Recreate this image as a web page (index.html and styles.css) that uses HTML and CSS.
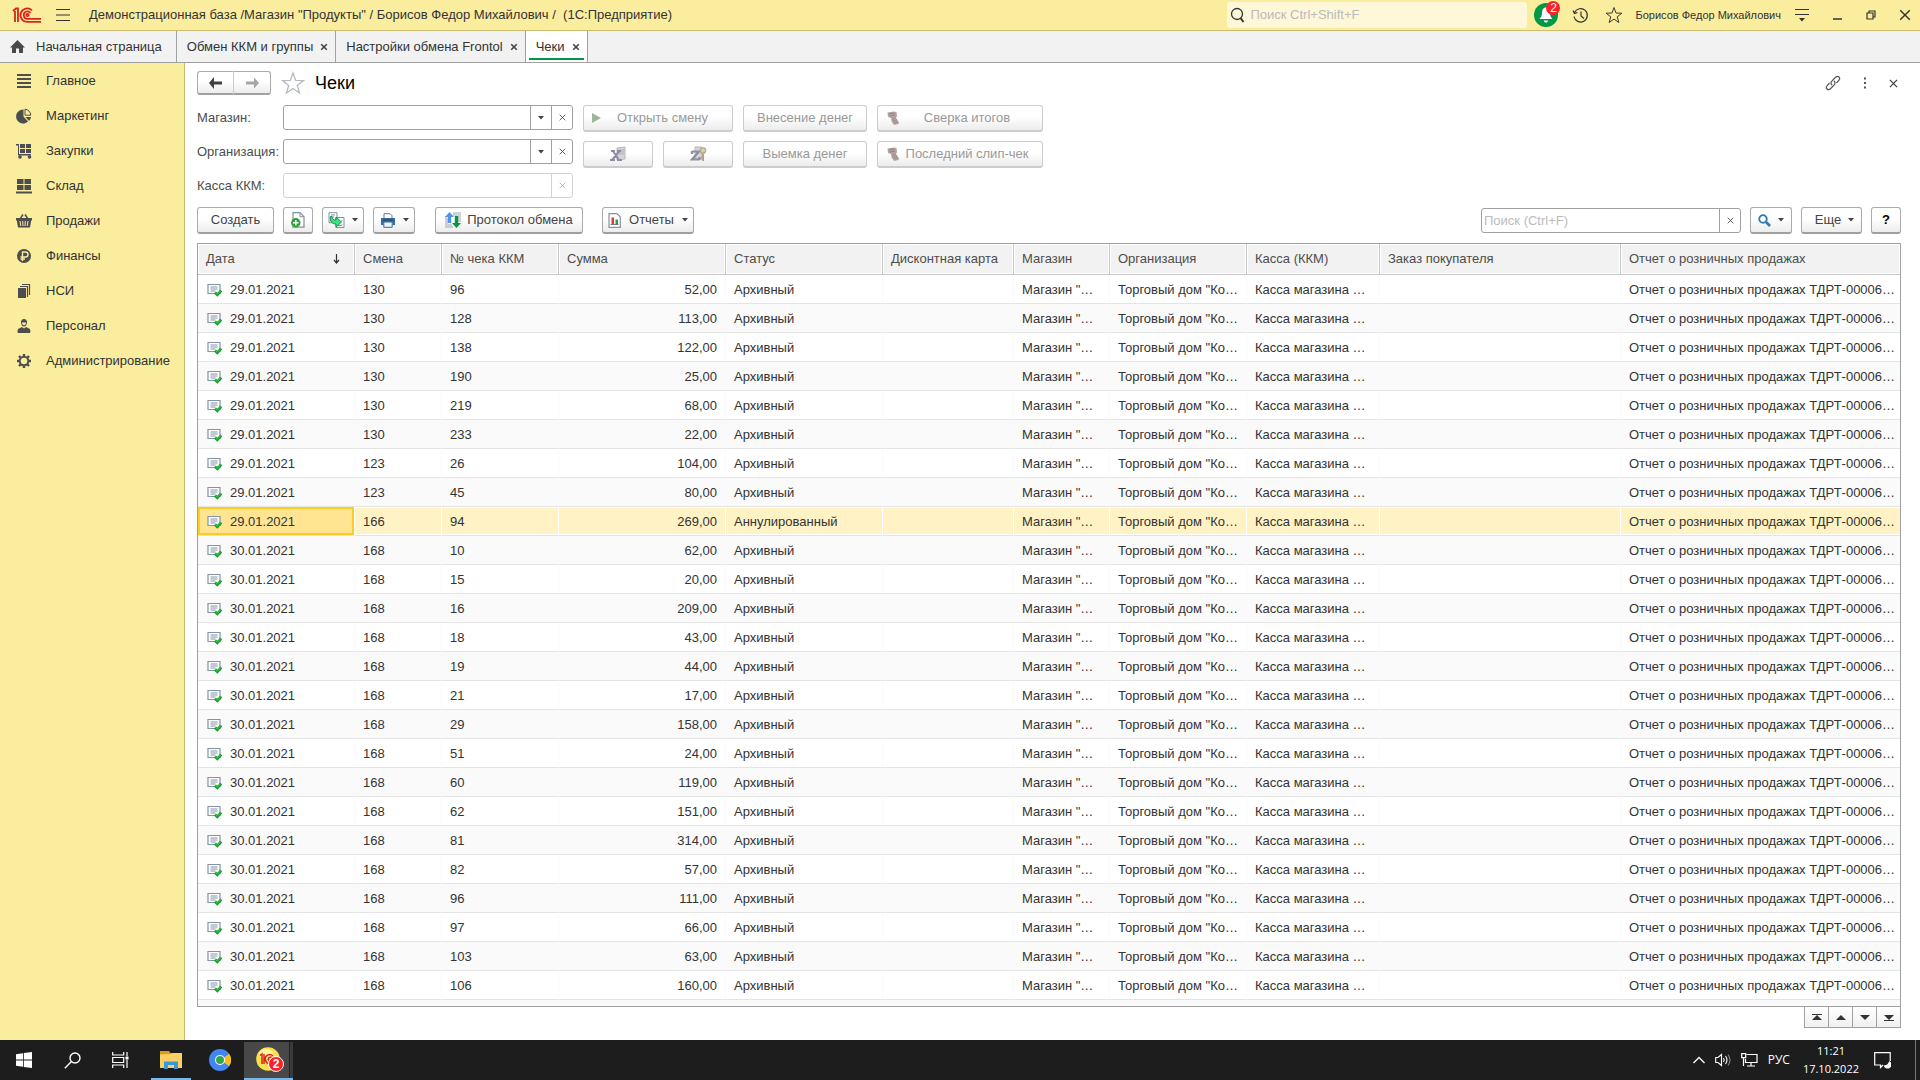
FILE: index.html
```html
<!DOCTYPE html>
<html lang="ru">
<head>
<meta charset="utf-8">
<title>Чеки</title>
<link rel="stylesheet" href="styles.css">
</head>
<body>
<svg class="sprite" aria-hidden="true">
  <symbol id="i-close" viewBox="0 0 10 10"><path d="M1.5 1.5l7 7M8.5 1.5l-7 7" fill="none" stroke="currentColor" stroke-width="2"/></symbol>
  <symbol id="i-thin-close" viewBox="0 0 10 10"><path d="M1 1l8 8M9 1l-8 8" fill="none" stroke="currentColor" stroke-width="1.2"/></symbol>
  <symbol id="i-caret" viewBox="0 0 6 4"><path d="M0 0h6L3 3.5z" fill="currentColor"/></symbol>
  <symbol id="i-star" viewBox="0 0 24 24"><path d="M12 2l2.700 7.400 7.800.2-6.200 4.800 2.200 7.600L12 17.500 5.500 22l2.200-7.600L1.500 9.600l7.800-.2z" fill="none" stroke="currentColor" stroke-width="1.300"/></symbol>
  <symbol id="i-terminal" viewBox="0 0 14 14"><path d="M1.500 1.500L8 .5 10.500 1l.5 4-1 2 3 4.500-.5 1.500-4.500 1L5.500 10.500 5 7 2 6z" fill="#b3a3a3"/><path d="M3 3l5.500-1M4 5l5-1" stroke="#948488" stroke-width="1.200"/><path d="M6.500 8l3-1M7 10l4-1.200M8 12l4-1.200" stroke="#9d8d90"/></symbol>
  <symbol id="i-doc" viewBox="0 0 15 14"><path d="M1 1.500h12v9H1z" fill="#fff" stroke="#8394a8" stroke-width="1.200"/><path d="M3.500 4h7M3.500 6h7M3.500 8h5" stroke="#8394a8"/><path d="M8 9.500l2.300 2.300L14.200 7.600" fill="none" stroke="#159a2c" stroke-width="2.800"/><path d="M8.300 9.300l2 2L13.800 7.600" fill="none" stroke="#37cf45" stroke-width="1"/></symbol>
</svg>

<header class="titlebar">
  <svg class="logo" viewBox="0 0 30 18" fill="none" stroke="#d9261c" stroke-width="1.800"><path d="M1 5l3-2.500h2V16M3 5v11"/><path d="M20 4.500A6.700 6.700 0 1 0 16 15.800h13M18.500 7A3.700 3.700 0 1 0 16 12.800h13"/><circle cx="15.500" cy="9" r="1.200"/></svg>
  <button class="plain" aria-label="Меню"><svg width="16" height="14" viewBox="0 0 16 14"><path d="M1 1.500h14M1 7h14M1 12.500h14" stroke="#333" stroke-width="1.200"/></svg></button>
  <span class="app-title">Демонстрационная база /Магазин "Продукты" / Борисов Федор Михайлович /&nbsp; (1С:Предприятие)</span>
  <label class="global-search">
    <svg width="15" height="16" viewBox="0 0 15 16" fill="none" stroke="#333"><circle cx="7" cy="7" r="5.500" stroke-width="1.300"/><path d="M10.500 11l3 4" stroke-width="2"/></svg>
    <input type="text" placeholder="Поиск Ctrl+Shift+F" aria-label="Поиск">
  </label>
  <button class="plain bell" aria-label="Уведомления"><svg width="24" height="24" viewBox="0 0 24 24"><circle cx="12" cy="12" r="12" fill="#009846"/><path d="M12 4.500c-3 0-4 2.500-4 5.500 0 3-1 4-2.500 6h13c-1.500-2-2.500-3-2.500-6 0-3-1-5.500-4-5.500zM10 17.500h4c0 1.500-.8 2-2 2s-2-.5-2-2z" fill="#fff"/></svg><span class="badge">2</span></button>
  <button class="plain" aria-label="История"><svg width="17" height="17" viewBox="0 0 17 17" fill="none" stroke="#333" stroke-width="1.200"><path d="M2.500 5.500A6.700 6.700 0 1 1 2 9.500M1 3.500l1.500 3 3-1M9 4.500V9l3 2.500"/></svg></button>
  <button class="plain dark" aria-label="Избранное"><svg width="18" height="18"><use href="#i-star"/></svg></button>
  <a class="user" href="#">Борисов Федор Михайлович</a>
  <button class="plain" aria-label="Настройки"><svg width="16" height="14" viewBox="0 0 16 14"><path d="M1 1.500h14M1 6.500h14" stroke="#333" stroke-width="1.200"/><path d="M5 10h6l-3 3.500z" fill="#333"/></svg></button>
  <div class="window-buttons">
    <button class="plain" aria-label="Свернуть"><svg width="10" height="10" viewBox="0 0 10 10"><path d="M0 9h9" stroke="#333" stroke-width="1.500"/></svg></button>
    <button class="plain" aria-label="Восстановить"><svg width="10" height="10" viewBox="0 0 10 10" fill="none" stroke="#333" stroke-width="1.200"><path d="M1 3h6v6H1zM3 3V1h6v6H7"/></svg></button>
    <button class="plain dark" aria-label="Закрыть"><svg width="12" height="12"><use href="#i-thin-close"/></svg></button>
  </div>
</header>

<nav class="tabs">
  <a class="tab home" href="#"><svg width="15" height="14" viewBox="0 0 15 14"><path d="M7.500 0L0 7.500h2V13h4V8.500h3V13h4V7.500h2z" fill="#4a4a4a"/></svg>Начальная страница</a>
  <a class="tab" href="#">Обмен ККМ и группы<svg class="x"><use href="#i-close"/></svg></a>
  <a class="tab" href="#">Настройки обмена Frontol<svg class="x"><use href="#i-close"/></svg></a>
  <a class="tab active" href="#">Чеки<svg class="x"><use href="#i-close"/></svg></a>
</nav>

<div class="workspace">
  <nav class="sidebar">
    <a href="#"><svg viewBox="0 0 16 16"><path d="M1 2h14M1 6h14M1 10h14M1 14h14" stroke="#4d4d4d" stroke-width="2"/></svg>Главное</a>
    <a href="#"><svg viewBox="0 0 16 16"><path d="M7.500 1.500v7l4.500 5A7 7 0 1 1 7.500 1.500z" fill="#4d4d4d"/><path d="M9 1.200v6h5.800A6.300 6.300 0 0 0 9 1.200z" fill="none" stroke="#4d4d4d"/><path d="M9.500 9H15a7 7 0 0 1-2 4z" fill="#4d4d4d"/></svg>Маркетинг</a>
    <a href="#"><svg viewBox="0 0 16 16" fill="#4d4d4d"><path d="M0 1h3v10h12v1.500H2V2.500H0z"/><path d="M4 1h5v4H4zM10 1h5v4h-5zM4 6h5v4H4zM10 6h5v4h-5z"/><circle cx="4" cy="14" r="1.800"/><circle cx="13.500" cy="14" r="1.800"/></svg>Закупки</a>
    <a href="#"><svg viewBox="0 0 16 16" fill="#4d4d4d"><path d="M1 1h6.500v5H1zM8.500 1H15v5H8.500zM1 7h6.500v5H1zM8.500 7H15v5H8.500zM0 13.500h16v2H0z"/></svg>Склад</a>
    <a href="#"><svg viewBox="0 0 16 16"><path d="M4 6l3-4.500M12 6L9 1.500" stroke="#4d4d4d" stroke-width="1.500"/><path d="M0 5h16v2.500h-.8L14 14.500H2L.8 7.500H0z" fill="#4d4d4d"/><path d="M4 8l.8 5M6.700 8l.3 5M9.300 8L9 13M12 8l-.8 5" stroke="#fbed9e"/></svg>Продажи</a>
    <a href="#"><svg viewBox="0 0 16 16"><circle cx="8" cy="8" r="7" fill="#4d4d4d"/><path d="M6.500 13V4h3a2.400 2.400 0 0 1 0 5H4.500M4.500 11H9" fill="none" stroke="#fbed9e" stroke-width="1.400"/></svg>Финансы</a>
    <a href="#"><svg viewBox="0 0 16 16"><path d="M2 5h8v10H2z" fill="#4d4d4d"/><path d="M4 3.500h7.500V14M6 1.500h7.500V12" fill="none" stroke="#4d4d4d" stroke-width="1.200"/></svg>НСИ</a>
    <a href="#"><svg viewBox="0 0 16 16"><path d="M5 4c0-4 6-4 6 0 0 2.500-1.200 4.500-3 4.500S5 6.500 5 4z" fill="#4d4d4d"/><path d="M6 4.500h4C10 6.300 9 7.300 8 7.300S6 6.300 6 4.500z" fill="#fbed9e"/><path d="M2 15c-.6 0-.8-4 1-4.500L6 9l2 1.500L10 9l3 1.500c1.800.5 1.600 4.500 1 4.500z" fill="#4d4d4d"/></svg>Персонал</a>
    <a href="#"><svg viewBox="0 0 16 16" fill="none" stroke="#4d4d4d"><circle cx="8" cy="8" r="4.300" stroke-width="2"/><path d="M8 1v3M8 12v3M1 8h3M12 8h3M3 3l2 2M11 11l2 2M13 3l-2 2M5 11l-2 2" stroke-width="2.400"/></svg>Администрирование</a>
  </nav>

  <main class="page">
    <div class="page-head">
      <div class="history">
        <button class="btn" aria-label="Назад"><svg width="16" height="12" viewBox="0 0 16 12"><path d="M6 0v4.500h8v3H6V12L1 6z" fill="#404040"/></svg></button>
        <button class="btn" aria-label="Вперед"><svg width="16" height="12" viewBox="0 0 16 12"><path d="M10 .5v4H2v3h8v4L15 6z" fill="#a5a5a5"/></svg></button>
      </div>
      <button class="plain pale" aria-label="В избранное"><svg width="24" height="24"><use href="#i-star"/></svg></button>
      <h1>Чеки</h1>
      <div class="page-tools">
        <button class="plain" aria-label="Ссылка"><svg width="16" height="16" viewBox="0 0 16 16" fill="none" stroke="#555" stroke-width="1.200"><path d="M7.200 10.200C5.700 9 5.600 7.400 6.800 6.200l3.700-3.900c2.600-2.300 5.500.6 3.300 3.100L11.500 8"/><path d="M8.800 5.800c1.500 1.200 1.600 2.800.4 4l-3.700 3.900c-2.600 2.300-5.500-.6-3.300-3.100L4.500 8"/></svg></button>
        <button class="plain" aria-label="Действия"><svg width="4" height="12" viewBox="0 0 4 12"><path d="M1 .5h2v2H1zM1 5h2v2H1zM1 9.500h2v2H1z" fill="#555"/></svg></button>
        <button class="plain" aria-label="Закрыть форму"><svg width="9" height="9"><use href="#i-thin-close"/></svg></button>
      </div>
    </div>

    <div class="form">
      <div class="fields">
        <label for="shop">Магазин:</label>
        <div class="combo"><input id="shop" type="text"><button aria-label="Выбрать"><svg width="6" height="4"><use href="#i-caret"/></svg></button><button aria-label="Очистить"><svg width="7" height="7"><use href="#i-thin-close"/></svg></button></div>
        <label for="org">Организация:</label>
        <div class="combo"><input id="org" type="text"><button aria-label="Выбрать"><svg width="6" height="4"><use href="#i-caret"/></svg></button><button aria-label="Очистить"><svg width="7" height="7"><use href="#i-thin-close"/></svg></button></div>
        <label for="kkm">Касса ККМ:</label>
        <div class="combo off"><input id="kkm" type="text" disabled><button disabled aria-label="Очистить"><svg width="7" height="7"><use href="#i-thin-close"/></svg></button></div>
      </div>
      <div class="actions">
        <button class="btn wide lead" disabled><svg width="9" height="10" viewBox="0 0 9 10"><path d="M0 0l9 5-9 5z" fill="#9db49d"/></svg><span>Открыть смену</span></button>
        <button class="btn" disabled>Внесение денег</button>
        <button class="btn lead" disabled><svg width="14" height="14"><use href="#i-terminal"/></svg><span>Сверка итогов</span></button>
        <button class="btn" disabled aria-label="X-отчет"><svg width="17" height="16" viewBox="0 0 17 16"><path d="M7 2l8-1v12l-8 1z" fill="#d5d5d8" stroke="#b8b8b8"/><path d="M9 4h5M9 6h5M9 8h5" stroke="#b0b0b5"/><path d="M1 5h4M7 5h4M0 14h5M7 14h5M3 5l6 9M9.500 5L2 14" fill="none" stroke="#8d8da6" stroke-width="2"/></svg></button>
        <button class="btn" disabled aria-label="Z-отчет"><svg width="17" height="16" viewBox="0 0 17 16"><path d="M5 1h7v12H5z" fill="#d5d5d8" stroke="#b8b8b8"/><path d="M2 5.500h7L2 13.500h7.500M2 5v3M9.500 14v-3" fill="none" stroke="#8d8da6" stroke-width="2.200"/><circle cx="13" cy="4.500" r="2.700" fill="#d9cfae" stroke="#b3a98d" stroke-width="1.300"/><path d="M13 7.500V15M13 11.500h-2" stroke="#b3a08d" stroke-width="2"/></svg></button>
        <button class="btn" disabled>Выемка денег</button>
        <button class="btn lead" disabled><svg width="14" height="14"><use href="#i-terminal"/></svg><span>Последний слип-чек</span></button>
      </div>
    </div>

    <div class="toolbar">
      <button class="btn w-create">Создать</button>
      <button class="btn w-icon" aria-label="Скопировать"><svg width="14" height="16" viewBox="0 0 14 16"><path d="M2 .7h7l4 4v10.500H2z" fill="#fff" stroke="#8090a0" stroke-width="1.200"/><path d="M9 .7v4h4" fill="none" stroke="#8090a0"/><circle cx="4.800" cy="10.800" r="4.700" fill="#27a338"/><path d="M4.800 8v5.600M2 10.800h5.600" stroke="#fff" stroke-width="1.500"/></svg></button>
      <button class="btn w-drop" aria-label="Создать на основании"><svg width="17" height="16" viewBox="0 0 17 16"><path d="M1 .7h8v10H1zM8 5.500h8v10H8z" fill="#fff" stroke="#8090a0"/><path d="M3 3h4M3 5h3M13.500 8.500h1M13.500 13h1M10 13.500h4" stroke="#8090a0"/><path d="M2.500 4.500c-.8 5 1.500 7.500 5.500 7.500v3l5.500-5L8 5v3C5.500 8 4 7.500 4 4.500z" fill="#3fe084" stroke="#16924a"/></svg><svg width="6" height="4"><use href="#i-caret"/></svg></button>
      <button class="btn w-drop" aria-label="Печать"><svg width="16" height="15" viewBox="0 0 16 15"><path d="M4 .7h6l2 2V6H4z" fill="#fff" stroke="#5b7996"/><path d="M1 5h14v7h-2.500V9.500h-9V12H1z" fill="#356c9c"/><path d="M3.800 9h8.400v5.300H3.800z" fill="#eef3f7" stroke="#356c9c"/><path d="M3 7h10" stroke="#1d4566"/></svg><svg width="6" height="4"><use href="#i-caret"/></svg></button>
      <button class="btn w-log"><svg width="16" height="16" viewBox="0 0 16 16"><path d="M0 5h2M0 7h3M0 9h3M0 11h3M0 13h7M0 15h8M8 1h8M8 3h8M13 5h3M13 7h3M13 9h3" stroke="#9aa7b5"/><path d="M4.500 0L9 5H6.200v6H2.800V5H0z" fill="#4f93ee"/><path d="M11.500 16L7 11h2.800V4h3.400v7H16z" fill="#009846"/></svg>Протокол обмена</button>
      <button class="btn w-report"><svg width="13" height="15" viewBox="0 0 13 15"><path d="M1 .7h8l3.300 3.300v10.300H1z" fill="#fff" stroke="#8094a5" stroke-width="1.200"/><path d="M2.500 11.500h8" stroke="#777"/><path d="M3.500 4.500H6V11H3.500z" fill="#e33"/><path d="M7.500 6.500H10V11H7.500z" fill="#19a33c"/></svg>Отчеты<svg width="6" height="4"><use href="#i-caret"/></svg></button>
      <div class="combo list-search"><input type="text" placeholder="Поиск (Ctrl+F)" aria-label="Поиск по списку"><button aria-label="Очистить поиск"><svg width="7" height="7"><use href="#i-thin-close"/></svg></button></div>
      <button class="btn w-drop" aria-label="Найти"><svg width="13" height="13" viewBox="0 0 13 13" fill="none" stroke="#2f7ab0"><circle cx="5" cy="5" r="3.800" stroke-width="1.800"/><path d="M8 8l4 4" stroke-width="2.600"/></svg><svg width="6" height="4"><use href="#i-caret"/></svg></button>
      <button class="btn w-more">Еще<svg width="6" height="4"><use href="#i-caret"/></svg></button>
      <button class="btn w-icon help">?</button>
    </div>

    <div class="grid-frame">
      <table class="grid">
        <colgroup><col class="c-date"><col class="c-shift"><col class="c-num"><col class="c-sum"><col class="c-date"><col class="c-card"><col class="c-shop"><col class="c-org"><col class="c-kkm"><col class="c-order"><col></colgroup>
        <thead><tr>
          <th><span class="sorted">Дата<svg width="7" height="10" viewBox="0 0 7 10"><path d="M3.500 0v9M1 6l2.500 3L6 6" fill="none" stroke="#333" stroke-width="1.200"/></svg></span></th>
          <th>Смена</th><th>№ чека ККМ</th><th>Сумма</th><th>Статус</th><th>Дисконтная карта</th><th>Магазин</th><th>Организация</th><th>Касса (ККМ)</th><th>Заказ покупателя</th><th>Отчет о розничных продажах</th>
        </tr></thead>
        <tbody id="rows"></tbody>
      </table>
    </div>
    <div class="pager">
      <button aria-label="В начало"><svg width="10" height="7" viewBox="0 0 10 7"><path d="M0 .5h10" stroke="#333"/><path d="M5 1l5 5H0z" fill="#333"/></svg></button>
      <button aria-label="Вверх"><svg width="10" height="7" viewBox="0 0 10 7"><path d="M5 1l5 5H0z" fill="#333"/></svg></button>
      <button aria-label="Вниз"><svg width="10" height="7" viewBox="0 0 10 7"><path d="M5 6l5-5H0z" fill="#333"/></svg></button>
      <button aria-label="В конец"><svg width="10" height="7" viewBox="0 0 10 7"><path d="M0 6.500h10" stroke="#333"/><path d="M5 6l5-5H0z" fill="#333"/></svg></button>
    </div>
  </main>
</div>

<footer class="taskbar">
  <button class="task" aria-label="Пуск"><svg width="16" height="16" viewBox="0 0 16 16"><path d="M0 2.200L7 1.200V7.600H0zM7.800 1.100L16 0v7.600H7.800zM0 8.400h7v6.400l-7-1zM7.800 8.400H16V16l-8.200-1.100z" fill="#fff"/></svg></button>
  <button class="task" aria-label="Поиск"><svg width="17" height="17" viewBox="0 0 17 17" fill="none" stroke="#fff" stroke-width="1.400"><circle cx="11" cy="6" r="5"/><path d="M7.500 9.500L.8 16.200"/></svg></button>
  <button class="task" aria-label="Представление задач"><svg width="17" height="16" viewBox="0 0 17 16" fill="none" stroke="#fff" stroke-width="1.200"><path d="M.7 0v3h11V0M.7 16v-3h11v3M.7 5.500h11v5H.7zM15 0v4M15 8v8"/><path d="M13.500 4.500h3v3h-3z" fill="#fff" stroke="none"/></svg></button>
  <button class="task open" aria-label="Проводник"><svg width="22" height="19" viewBox="0 0 22 19"><path d="M0 0h9l1.500 2H21v3H0z" fill="#dd9b16"/><path d="M0 3.500L11 3l1-1h10v15H0z" fill="#fcd063"/><path d="M4 18v-7.500h14V18h-4v-4H8v4z" fill="#3d97d6"/></svg></button>
  <button class="task" aria-label="Браузер"><svg width="22" height="22" viewBox="0 0 22 22"><circle cx="11" cy="11" r="11" fill="#4286f5"/><path d="M12 11l8-6.300A11 11 0 0 1 20 17.300z" fill="#fcbc1a"/><circle cx="11" cy="11" r="5" fill="#fff"/><circle cx="11" cy="11" r="4" fill="#34a355"/></svg></button>
  <button class="task current" aria-label="1С:Предприятие"><svg width="26" height="26" viewBox="0 0 26 26"><circle cx="12" cy="12" r="11.800" fill="#f9e04c"/><ellipse cx="10" cy="7" rx="7" ry="5" fill="#fff4a0"/><path d="M4 8.500l2-1.500v10M8 7v10M17 9a4.500 4.500 0 1 0-2 7.500h4M16 11a2 2 0 1 0-1 3" fill="none" stroke="#d9261c" stroke-width="1.500"/></svg><span class="badge">2</span></button>
  <div class="tray">
    <svg width="12" height="8" viewBox="0 0 12 8" fill="none" stroke="#fff" stroke-width="1.300"><path d="M.5 7L6 1.500 11.500 7"/></svg>
    <svg width="16" height="14" viewBox="0 0 16 14" fill="none" stroke="#fff" stroke-width="1.100"><path d="M.7 4.500H3L6.500 1.500v11L3 9.500H.7zM8.500 5q1.500 2 0 4M10.500 3q3 4 0 8"/><path d="M13 1.500q4 5.500 0 11" stroke="#888"/></svg>
    <svg width="17" height="14" viewBox="0 0 17 14" fill="none" stroke="#fff" stroke-width="1.200"><path d="M5.500 1.500H16v8H4.500V6M10 9.500V13M6 13h8M2.500 5v8"/><path d="M.7 .7h4v4h-4z"/></svg>
    <span class="lang">РУС</span>
    <time class="clock">11:21<br>17.10.2022</time>
    <svg width="17" height="17" viewBox="0 0 17 17" fill="none" stroke="#fff" stroke-width="1.200"><path d="M9 13l-2.500 2.500V13H.7V.7h15.500V9"/><path d="M15.500 10a3.300 3.300 0 1 1-5 4c2.500 0 4-1 5-4z" fill="#fff"/></svg>
    <span class="desktop-edge"></span>
  </div>
</footer>
<script src="rows.js"></script>
</body>
</html>
```
FILE: styles.css
```css
* { box-sizing: border-box; }
body { margin: 0; min-height: 100vh; display: flex; flex-direction: column; font: 13px/16px "Liberation Sans", Arial, sans-serif; color: #333; background: #fff; }
button, input { font: inherit; color: inherit; margin: 0; padding: 0; }
a { color: inherit; text-decoration: none; }
svg { flex: none; display: block; }
.sprite { display: none; }
.plain { border: 0; background: none; display: flex; align-items: center; justify-content: center; }
.dark { color: #333; }
.pale { color: #b4bac2; }

.titlebar { display: flex; align-items: center; height: 31px; padding-left: 12px; background: #fbed9e; border-bottom: 1px solid #c9bc6c; }
.logo { width: 30px; height: 18px; margin-right: 13px; }
.app-title { flex: 1; margin-left: 18px; white-space: nowrap; }
.global-search { display: flex; align-items: center; gap: 5px; width: 300px; height: 26px; padding-left: 3px; background: #fef7d8; border-radius: 3px; }
.global-search input { flex: 1; min-width: 0; border: 0; background: none; outline: 0; }
::placeholder { color: #bbb; opacity: 1; }
.bell { position: relative; margin: 0 14px 0 7px; }
.badge { position: absolute; top: -2px; right: -2px; width: 14px; height: 14px; border-radius: 50%; background: #ff1f28; color: #fff; font-size: 12px; line-height: 14px; text-align: center; }
.bell + .plain { margin-right: 16px; }
.user { margin: 0 13px 0 12px; font-size: 11px; white-space: nowrap; }
.window-buttons { display: flex; align-items: center; gap: 23px; margin: 0 9px 0 23px; }

.tabs { display: flex; height: 32px; background: #f2f2f2; border-bottom: 1px solid #a0a0a0; }
.tab { display: flex; align-items: center; gap: 7px; padding: 0 7px 0 10px; border-right: 1px solid #a0a0a0; white-space: nowrap; }
.tab.home { gap: 11px; padding: 0 14px 0 10px; }
.tab .x { width: 8px; height: 8px; color: #444; }
.tab.active { background: linear-gradient(#009846, #009846) center bottom 2px / calc(100% - 6px) 2px no-repeat #fff; }

.workspace { flex: 1; display: flex; }
.sidebar { flex: none; width: 185px; background: #fbed9e; border-right: 1px solid #c9bc6c; }
.sidebar a { display: flex; align-items: center; gap: 14px; height: 35px; padding-left: 16px; }
.sidebar svg { width: 16px; height: 16px; }

.page { flex: 1; min-width: 0; display: flex; flex-direction: column; padding: 8px 19px 12px 12px; }
.page-head { display: flex; align-items: center; height: 24px; margin-bottom: 10px; }
.page-head h1 { margin: 0 0 0 10px; font-size: 18px; line-height: 24px; font-weight: 400; color: #000; }
.page-tools { display: flex; align-items: center; gap: 22px; margin: 0 3px 0 auto; }
.history { display: flex; margin-right: 10px; }
.history .btn { width: 37px; height: 24px; }
.history .btn:first-child { border-radius: 3px 0 0 3px; border-right-color: #ccc; }
.history .btn:last-child { border-radius: 0 3px 3px 0; border-left: 0; }

.btn { display: flex; align-items: center; justify-content: center; height: 27px; border: 1px solid #ababab; border-bottom: 2px solid #a0a0a0; border-radius: 3px; background: linear-gradient(#fff 45%, #ececec); white-space: nowrap; color: #444; }
.btn:disabled { color: #999; border-color: #ccc; }

.form { display: flex; gap: 10px; margin-bottom: 8px; }
.fields { display: grid; grid-template-columns: 78px 290px; grid-auto-rows: 25px; gap: 9px 8px; align-items: center; color: #4d4d4d; padding-bottom: 1px; }
.combo { display: flex; height: 25px; border: 1px solid #a0a0a0; border-radius: 3px; background: #fff; overflow: hidden; }
.combo input { flex: 1; min-width: 0; border: 0; padding: 0 2px; outline: 0; background: none; }
.combo button { display: flex; align-items: center; justify-content: center; width: 21px; border: 0; border-left: 1px solid #a0a0a0; background: none; color: #444; }
.combo.off, .combo.off button { border-color: #d2d2d2; color: #aaa; }
.actions { display: grid; grid-template-columns: 70px 70px 124px 166px; grid-auto-rows: 27px; gap: 9px 10px; }
.wide { grid-column: span 2; }
.lead { padding: 0 8px; }
.lead span { flex: 1; text-align: center; }

.toolbar { display: flex; align-items: center; gap: 9px; margin-bottom: 9px; }
.toolbar .btn { gap: 7px; }
.w-create { width: 77px; }
.w-icon { width: 30px; }
.w-drop { width: 42px; }
.toolbar .w-log { width: 148px; margin: 0 10px 0 11px; gap: 6px; }
.toolbar .w-report { width: 92px; gap: 8px; }
.toolbar .w-more { width: 61px; padding-left: 6px; }
.help { font-weight: 700; color: #000; }
.list-search { width: 260px; margin-left: auto; }

.grid-frame { flex: 1; border: 1px solid #a0a0a0; overflow: hidden; background: #fafafa; }
.grid { width: 100%; table-layout: fixed; border-collapse: separate; border-spacing: 0; }
.c-date { width: 157px; } .c-shift { width: 87px; } .c-num { width: 117px; } .c-sum { width: 167px; } .c-card { width: 131px; }
.c-shop { width: 96px; } .c-org { width: 137px; } .c-kkm { width: 133px; } .c-order { width: 241px; }
.grid th { height: 31px; padding: 0 8px; text-align: left; font-weight: 400; color: #4d4d4d; background: #f2f2f2; border-right: 1px solid #c8c8c8; border-bottom: 1px solid #c8c8c8; box-shadow: inset 0 0 0 1px #fff; white-space: nowrap; }
.grid th:last-child { border-right: 0; }
.sorted { display: flex; justify-content: space-between; align-items: center; padding-right: 6px; }
.grid td { height: 29px; padding: 2px 8px 0; border-right: 1px solid transparent; border-bottom: 1px solid #e4e4e4; background: #fff; background-clip: padding-box; white-space: nowrap; overflow: hidden; }
.grid td:last-child { border-right: 0; }
.grid tr:nth-child(even) td { background: #fafafa; }
.grid td:first-child { padding-left: 9px; }
.grid .sum { text-align: right; }
.doc { display: flex; align-items: center; gap: 8px; }
.grid tbody .selected td { background: #fff2c4 padding-box; border-right-color: #fff; box-shadow: inset 0 1px #fff, inset 0 -1px #fff; }
.grid tbody .selected td:first-child { background: #ffe492 padding-box; box-shadow: inset 0 0 0 2px #ffcb1c; }

.pager { display: flex; align-self: flex-end; margin-top: -1px; border: 1px solid #a0a0a0; }
.pager button { display: flex; align-items: center; justify-content: center; width: 24px; height: 20px; border: 0; border-left: 1px solid #a0a0a0; background: linear-gradient(#fff, #f0f0f0); }
.pager button:first-child { border-left: 0; width: 23px; }

.taskbar { display: flex; height: 40px; background: #1d1d1d; color: #fff; }
.task { position: relative; display: flex; align-items: center; justify-content: center; width: 48px; border: 0; background: none; }
.task.open { width: 40px; margin: 0 5px 0 7px; border-bottom: 2px solid #76b9ed; border-top: 2px solid transparent; }
.task.current { width: 49px; background: linear-gradient(to left, #3a3a3a 3px, #222 3px, #222 4px, #484848 4px) padding-box; border-bottom: 2px solid #76b9ed; border-top: 2px solid transparent; }
.task .badge { top: 14px; right: 9px; border: 1px solid #fff; width: 16px; height: 16px; font-weight: 700; }
.tray { display: flex; align-items: center; margin-left: auto; gap: 13px; font-family: "Open Sans", sans-serif; }
.tray svg { margin-right: -3px; }
.lang { font-size: 12px; }
.clock { font-size: 11px; line-height: 18px; text-align: center; }
.desktop-edge { align-self: stretch; width: 5px; margin-left: 14px; border-left: 1px solid #777; }
.clock + svg { margin-left: 2px; }
```
FILE: rows.js
```js
// date, shift, receipt number, amount, status (archived when omitted)
const receipts = [
  ["29.01.2021", 130, 96, "52,00"], ["29.01.2021", 130, 128, "113,00"], ["29.01.2021", 130, 138, "122,00"],
  ["29.01.2021", 130, 190, "25,00"], ["29.01.2021", 130, 219, "68,00"], ["29.01.2021", 130, 233, "22,00"],
  ["29.01.2021", 123, 26, "104,00"], ["29.01.2021", 123, 45, "80,00"], ["29.01.2021", 166, 94, "269,00", "Аннулированный"],
  ["30.01.2021", 168, 10, "62,00"], ["30.01.2021", 168, 15, "20,00"], ["30.01.2021", 168, 16, "209,00"],
  ["30.01.2021", 168, 18, "43,00"], ["30.01.2021", 168, 19, "44,00"], ["30.01.2021", 168, 21, "17,00"],
  ["30.01.2021", 168, 29, "158,00"], ["30.01.2021", 168, 51, "24,00"], ["30.01.2021", 168, 60, "119,00"],
  ["30.01.2021", 168, 62, "151,00"], ["30.01.2021", 168, 81, "314,00"], ["30.01.2021", 168, 82, "57,00"],
  ["30.01.2021", 168, 96, "111,00"], ["30.01.2021", 168, 97, "66,00"], ["30.01.2021", 168, 103, "63,00"],
  ["30.01.2021", 168, 106, "160,00"]
];
document.getElementById("rows").innerHTML = receipts.map(([date, shift, number, sum, status]) => `
  <tr${status ? ' class="selected"' : ""}>
    <td><span class="doc"><svg width="15" height="14"><use href="#i-doc"/></svg>${date}</span></td>
    <td>${shift}</td><td>${number}</td><td class="sum">${sum}</td><td>${status || "Архивный"}</td><td></td>
    <td>Магазин "…</td><td>Торговый дом "Ко…</td><td>Касса магазина …</td><td></td>
    <td>Отчет о розничных продажах ТДРТ-00006…</td>
  </tr>`).join("");
```
